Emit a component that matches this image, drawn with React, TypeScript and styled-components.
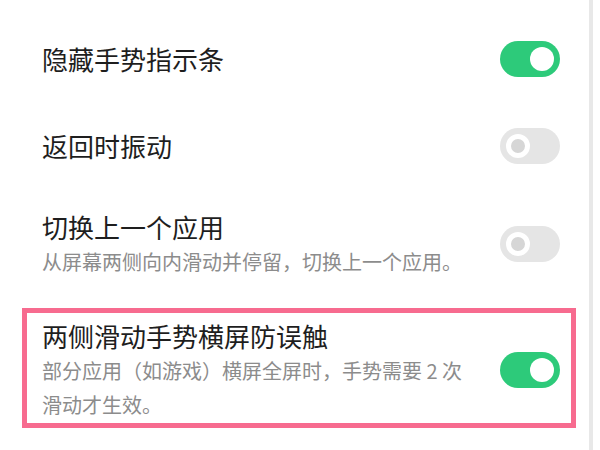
import React from 'react';
import styled, { createGlobalStyle } from 'styled-components';

const GlobalStyle = createGlobalStyle`
  html, body {
    margin: 0;
    padding: 0;
    background: #ffffff;
  }
  body {
    font-family: "Noto Sans CJK SC", "Noto Sans", sans-serif;
  }
`;

type Setting = {
  title: string;
  desc?: string;
  on: boolean;
  highlight?: boolean;
};

const settings: Setting[] = [
  { title: '隐藏手势指示条', on: true },
  { title: '返回时振动', on: false },
  { title: '切换上一个应用', desc: '从屏幕两侧向内滑动并停留，切换上一个应用。', on: false },
  {
    title: '两侧滑动手势横屏防误触',
    desc: '部分应用（如游戏）横屏全屏时，手势需要 2 次滑动才生效。',
    on: true,
    highlight: true,
  },
];

const App = () => {
  return (
    <>
      <GlobalStyle />
      <Page>
        <List>
          {settings.map((s) => (
            <Item key={s.title} $highlight={!!s.highlight} $single={!s.desc}>
              <TextBlock>
                <Title>{s.title}</Title>
                {s.desc && <Desc>{s.desc}</Desc>}
              </TextBlock>
              <Toggle $on={s.on}>
                <Knob $on={s.on} />
              </Toggle>
            </Item>
          ))}
        </List>
        <ScrollTrack />
      </Page>
    </>
  );
};

export default App;

const Page = styled.div`
  width: 600px;
  height: 450px;
  overflow: hidden;
  display: flex;
  background: #ffffff;
`;

const List = styled.div`
  flex: 1;
  display: flex;
  flex-direction: column;
  gap: 23px;
  padding-top: 25px;
`;

const Item = styled.div<{ $highlight: boolean; $single: boolean }>`
  margin: 0 13px 0 22px;
  border: 5px solid ${(p) => (p.$highlight ? '#f76b8f' : 'transparent')};
  padding: 5px 11px 1px 15px;
  min-height: ${(p) => (p.$single ? '64px' : 'auto')};
  display: flex;
  align-items: center;
  gap: 28px;
  box-sizing: border-box;
`;

const TextBlock = styled.div`
  flex: 1;
  min-width: 0;
  align-self: stretch;
  display: flex;
  flex-direction: column;
  justify-content: center;
`;

const Title = styled.div`
  font-size: 26px;
  line-height: 36px;
  color: #1e1e1e;
`;

const Desc = styled.div`
  font-size: 20px;
  line-height: 34px;
  color: #8c8c8c;
`;

const Toggle = styled.div<{ $on: boolean }>`
  flex: none;
  width: 60px;
  height: 36px;
  border-radius: 18px;
  background: ${(p) => (p.$on ? '#2dca7a' : '#e5e5e5')};
  display: flex;
  align-items: center;
  justify-content: ${(p) => (p.$on ? 'flex-end' : 'flex-start')};
  padding: 0 6px;
  box-sizing: border-box;
`;

const Knob = styled.span<{ $on: boolean }>`
  width: 24px;
  height: 24px;
  border-radius: 50%;
  box-sizing: border-box;
  background: ${(p) => (p.$on ? '#ffffff' : '#d6d6d6')};
  border: ${(p) => (p.$on ? 'none' : '5px solid #ffffff')};
`;

const ScrollTrack = styled.div`
  flex: none;
  width: 4px;
  height: 100%;
  margin-right: 7px;
  background: #e8e8e8;
`;
